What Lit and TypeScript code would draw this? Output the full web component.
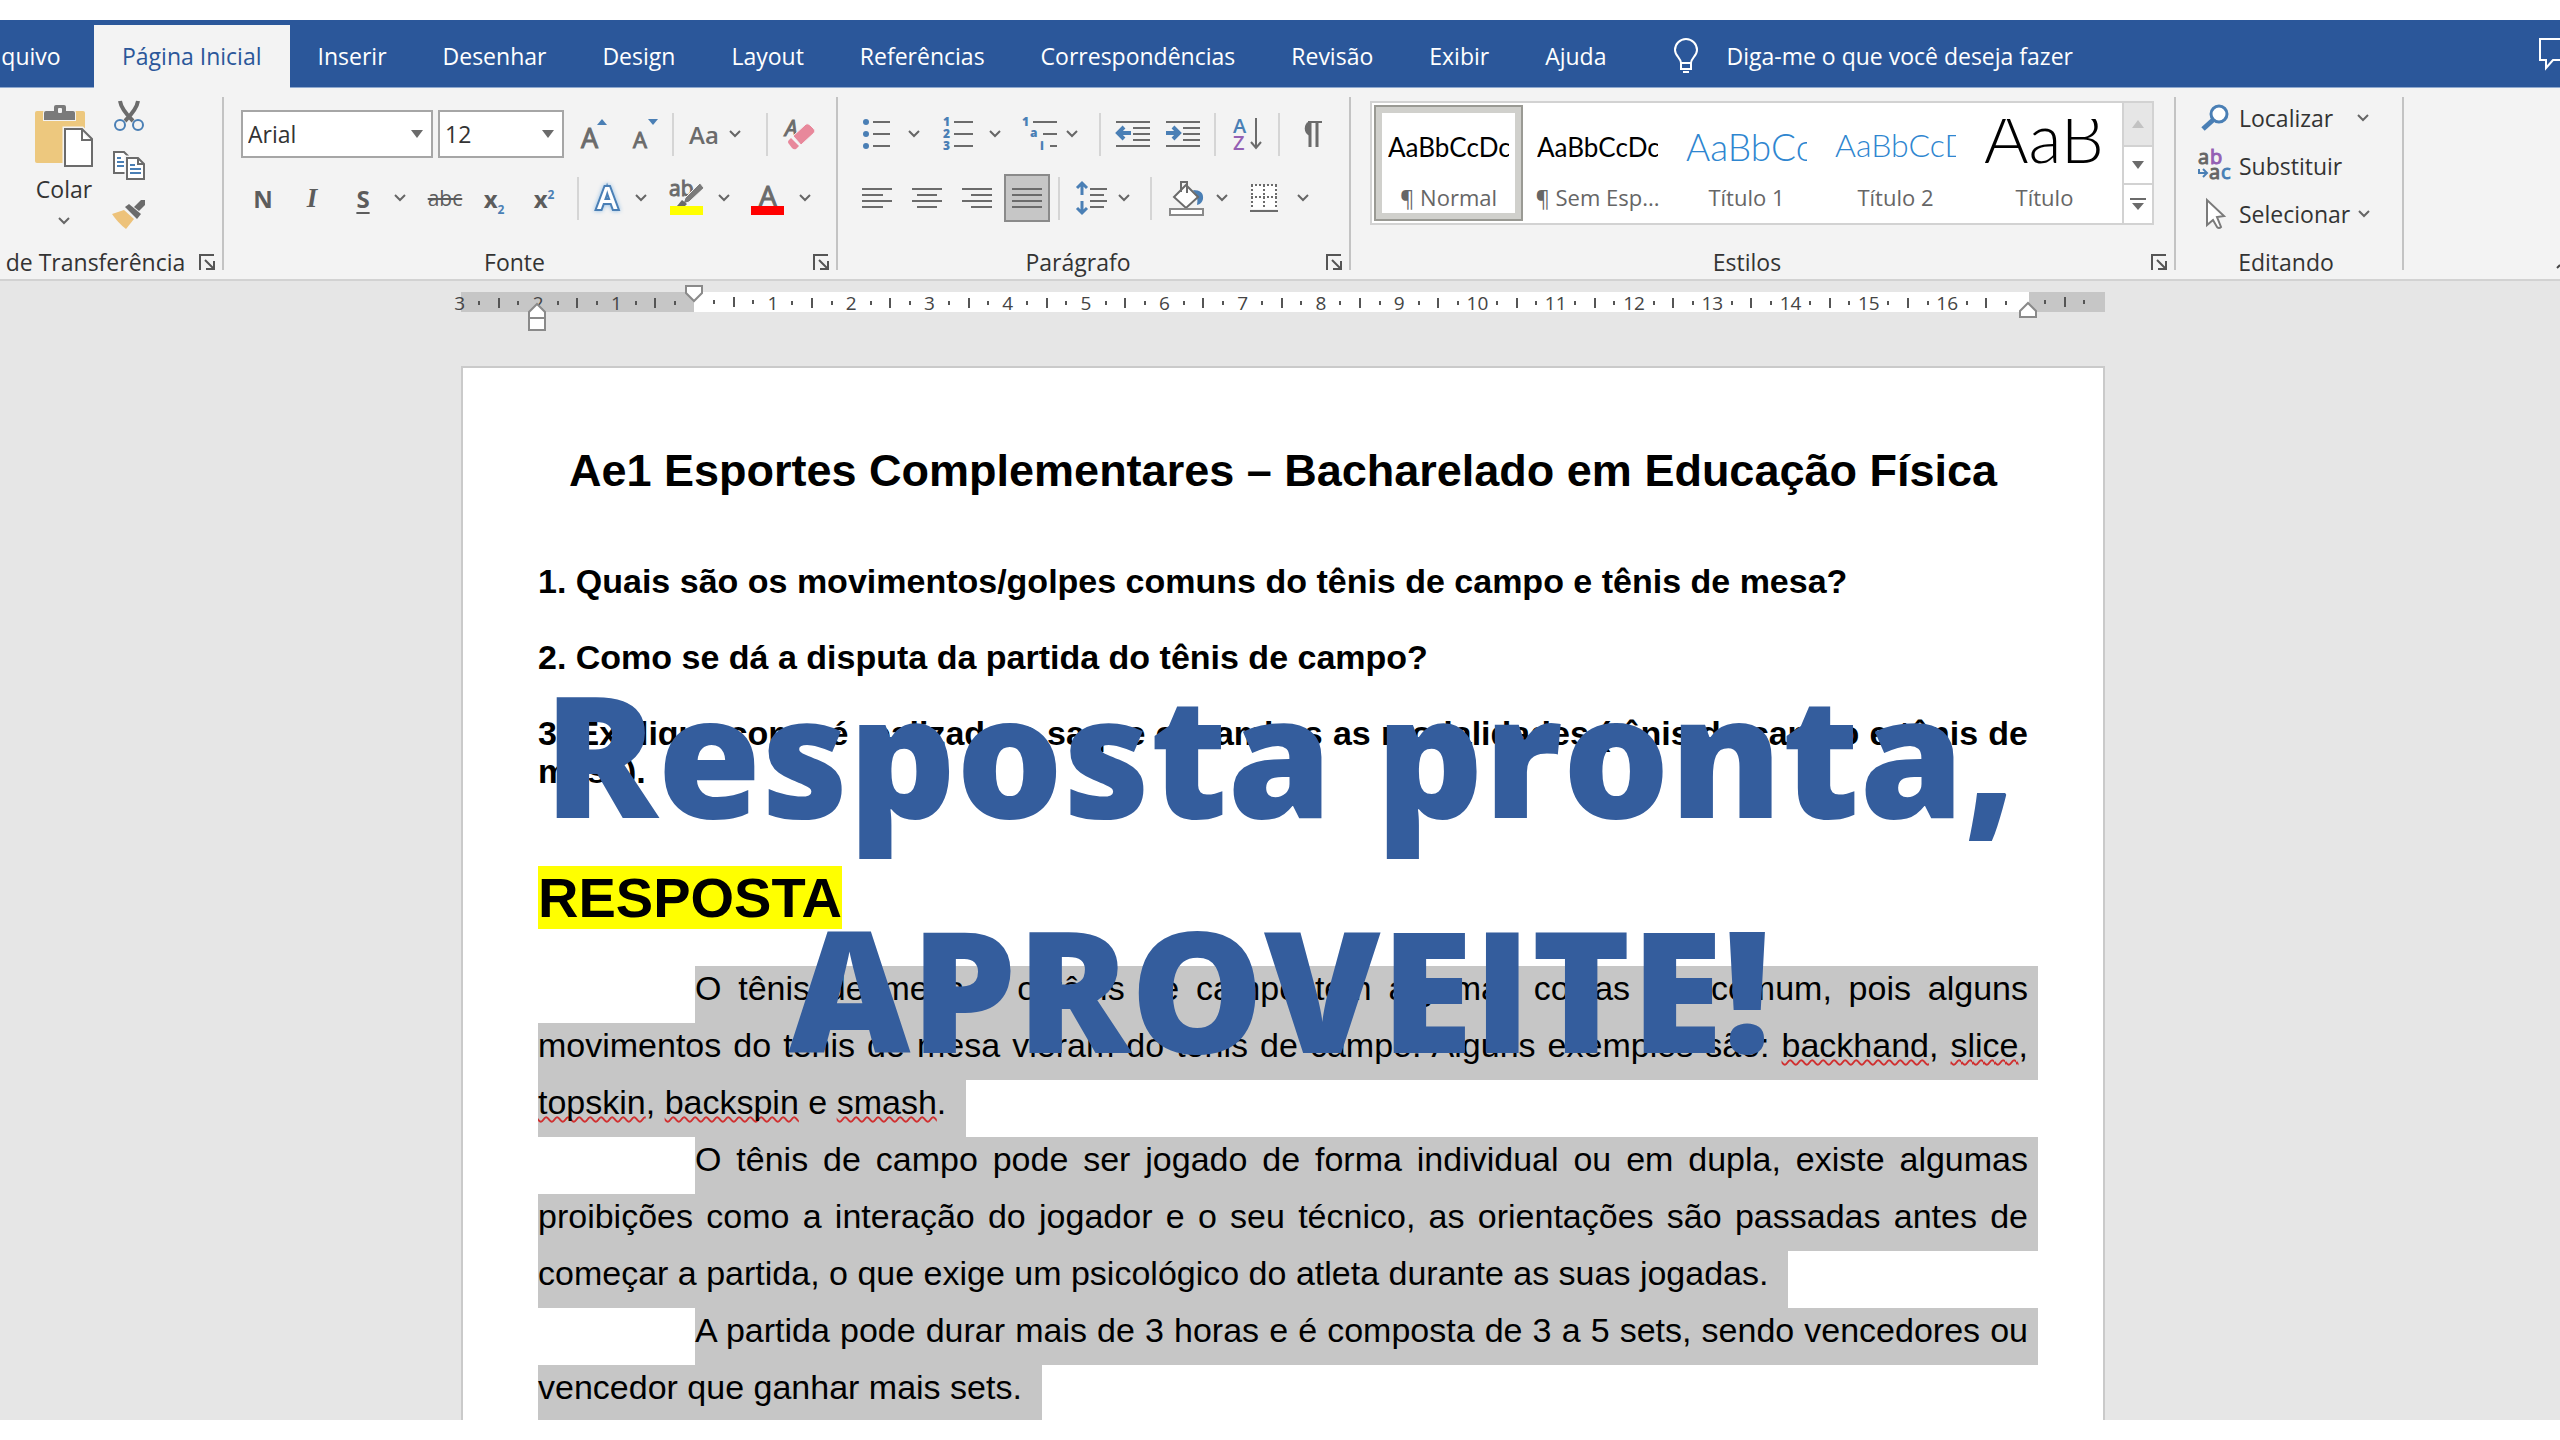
import { LitElement, html, svg, css, nothing } from "lit";
import { customElement, property } from "lit/decorators.js";

const gray = "#6b6b6b";
const blue = "#4a7fb5";

/** Horizontal strokes of a text-like icon: [x1, x2, y] */
const bars = (rows: number[][], color = gray) =>
  rows.map(([a, b, y]) => svg`<path d="M${a} ${y}H${b}" stroke=${color} stroke-width="2"/>`);

const icons: Record<string, { w: number; h: number; art: unknown }> = {
  paste: { w: 60, h: 64, art: svg`
    <rect x="1" y="7" width="50" height="52" rx="2" fill="#edc87e"/>
    <path d="M10 16V9a2 2 0 0 1 2-2h8V3a2 2 0 0 1 2-2h8a2 2 0 0 1 2 2V7h7a2 2 0 0 1 2 2v7z" fill="#7a7a7a" stroke="#f3f3f3" stroke-width="2" paint-order="stroke"/>
    <rect x="24" y="4" width="4" height="5" rx="1" fill="#f3f3f3"/>
    <path d="M31 25H48L58 35V62H31z" fill="#fff" stroke="#f3f3f3" stroke-width="5"/>
    <path d="M31 25H48L58 35V62H31zM48 25V36H58" fill="#fff" stroke="#6b6b6b" stroke-width="2"/>` },
  cut: { w: 32, h: 32, art: svg`
    <path d="M7 1C8 8 13 14 20 21M25 1C24 8 19 14 12 21" stroke=${gray} stroke-width="4" fill="none"/>
    <circle cx="7" cy="25" r="5" fill="none" stroke=${blue} stroke-width="2"/>
    <circle cx="25" cy="25" r="5" fill="none" stroke=${blue} stroke-width="2"/>` },
  copy: { w: 34, h: 30, art: svg`
    <path d="M2 2H12L16 6V23H2z" fill="#fff" stroke=${gray} stroke-width="2"/>
    ${bars([[5, 9, 8], [5, 12, 12], [5, 12, 16]], blue)}
    <path d="M15 8H26L32 14V29H15z" fill="#fff" stroke="#f3f3f3" stroke-width="5"/>
    <path d="M15 8H26L32 14V29H15z" fill="#fff" stroke=${gray} stroke-width="2"/>
    <path d="M26 8V14H32" fill="none" stroke=${gray} stroke-width="2"/>
    ${bars([[18, 23, 15], [18, 29, 19], [18, 29, 23]], blue)}` },
  brush: { w: 34, h: 30, art: svg`
    <path d="M0 15L12 11L22 20L14 30Q6 24 0 15z" fill="#edc27a"/>
    <path d="M13 8L17 5L29 15L25 20z" fill=${gray}/>
    <path d="M22 8L29 1H33V6L27 12z" fill=${gray}/>` },
  grow: { w: 28, h: 32, art: svg`
    <text x="1" y="30" font-size="27" fill=${gray} stroke=${gray}>A</text><path d="M17 7L22 1L27 7z" fill=${blue}/>` },
  shrink: { w: 28, h: 32, art: svg`
    <text x="2" y="30" font-size="22" fill=${gray} stroke=${gray}>A</text><path d="M17 1H27L22 7z" fill=${blue}/>` },
  eraser: { w: 32, h: 34, art: svg`
    <text x="1" y="19" font-size="22" font-style="italic" fill=${gray} stroke=${gray}>A</text>
    <path d="M9 19L22 7Q24 6 26 8L30 12Q32 14 30 16L17 28z" fill="#e8889b" stroke="#f3f3f3"/>
    <path d="M7 21L15 29L12 32Q10 33 8 31L5 27Q3 25 5 23z" fill="#e8889b"/>` },
  glow: { w: 34, h: 36, art: svg`
    <text class="halo" x="6" y="29" font-size="31" font-weight="600" fill="#fff" stroke=${blue} stroke-width="4" paint-order="stroke">A</text>` },
  marker: { w: 36, h: 36, art: svg`
    <text x="0" y="16" font-size="21" fill=${gray} stroke=${gray}>ab</text>
    <path d="M31 3L35 8L20 22L14 24L16 18z" fill="#7a7a7a" stroke="#f3f3f3"/>
    <path d="M8 26L13 20L18 24L16 26z" fill=${gray}/><rect x="1" y="26" width="33" height="9" fill="#ff0"/>` },
  color: { w: 34, h: 36, art: svg`
    <text x="8" y="26" font-size="28" fill=${gray} stroke=${gray}>A</text><rect y="26" width="33" height="9" fill="#f00"/>` },
  bullets: { w: 28, h: 32, art: svg`
    <circle cx="4" cy="4" r="3" fill=${blue}/><circle cx="4" cy="16" r="3" fill=${blue}/><circle cx="4" cy="28" r="3" fill=${blue}/>
    ${bars([[11, 28, 4], [11, 28, 16], [11, 28, 28]])}` },
  numbers: { w: 30, h: 36, art: svg`
    <g font-size="12" font-weight="800" fill=${blue}><text x="0" y="10">1</text><text x="0" y="22">2</text><text x="0" y="34">3</text></g>
    ${bars([[11, 30, 6], [11, 30, 18], [11, 30, 30]])}` },
  levels: { w: 36, h: 36, art: svg`
    <g font-size="12" font-weight="800" fill=${blue}><text x="0" y="10">1</text><text x="8" y="21">a</text><text x="18" y="34">i</text></g>
    ${bars([[11, 35, 6], [21, 35, 18], [28, 35, 30]])}` },
  outdent: { w: 34, h: 30, art: svg`
    ${bars([[0, 34, 3], [17, 34, 9], [17, 34, 15], [17, 34, 21], [0, 34, 27]])}
    <path d="M15 14H4M8 8L2 14L8 20" fill="none" stroke=${blue} stroke-width="4"/>` },
  indent: { w: 34, h: 30, art: svg`
    ${bars([[0, 34, 3], [17, 34, 9], [17, 34, 15], [17, 34, 21], [0, 34, 27]])}
    <path d="M0 14H11M7 8L13 14L7 20" fill="none" stroke=${blue} stroke-width="4"/>` },
  sort: { w: 30, h: 34, art: svg`
    <text x="0" y="16" font-size="20" font-weight="600" fill=${blue}>A</text><text x="0" y="33" font-size="20" font-weight="600" fill="#9460b4">Z</text>
    <path d="M23 1V30M18 25L23 31L28 25" fill="none" stroke=${gray} stroke-width="2"/>` },
  pilcrow: { w: 24, h: 28, art: svg`
    <path d="M9 2H23" stroke=${gray} stroke-width="2"/><path d="M11 2V27M18 2V27" stroke=${gray} stroke-width="3"/><path d="M11 1A8 8 0 0 0 11 16z" fill=${gray}/>` },
  left: { w: 30, h: 22, art: bars([[0, 30, 2], [0, 21, 8], [0, 30, 14], [0, 21, 20]]) },
  center: { w: 30, h: 22, art: bars([[0, 30, 2], [5, 25, 8], [0, 30, 14], [5, 25, 20]]) },
  right: { w: 30, h: 22, art: bars([[0, 30, 2], [9, 30, 8], [0, 30, 14], [9, 30, 20]]) },
  justify: { w: 30, h: 22, art: bars([[0, 30, 2], [0, 30, 8], [0, 30, 14], [0, 30, 20]]) },
  spacing: { w: 30, h: 34, art: svg`
    <path d="M5 3V14M0 7L5 2L10 7M5 20V31M0 27L5 32L10 27" fill="none" stroke=${blue} stroke-width="3"/>
    ${bars([[13, 30, 8], [13, 27, 14], [13, 30, 20], [13, 27, 26]])}` },
  bucket: { w: 36, h: 36, art: svg`
    <path d="M24 10Q35 10 34 19Q33 24 28 25Q30 18 24 10z" fill=${blue}/>
    <path d="M17 5L29 17L17 28L5 17z" fill="#fff" stroke=${gray} stroke-width="2"/>
    <path d="M12 12V2H18V13" fill="none" stroke=${gray} stroke-width="2"/>
    <rect x="1" y="29" width="33" height="6" fill="#fff" stroke="#8a8a8a" stroke-width="2"/>` },
  borders: { w: 28, h: 30, art: svg`
    <path d="M1 2H27V26H1z" fill="#fff"/><path d="M1 2H28M1 14H28M2 2V26M14 2V26M26 2V26" stroke=${gray} stroke-width="2" stroke-dasharray="2 2"/>
    <path d="M0 28H28" stroke=${gray} stroke-width="2"/>` },
  launcher: { w: 17, h: 17, art: svg`
    <path d="M1 16V1H15M6 6L14 14M15 7V15H7" fill="none" stroke="#555" stroke-width="2"/>` },
  search: { w: 30, h: 28, art: svg`
    <path d="M13 16L3 25" stroke=${blue} stroke-width="5"/><circle cx="19" cy="10" r="8" fill="#fff" stroke=${blue} stroke-width="3"/>` },
  replace: { w: 34, h: 34, art: svg`
    <g font-size="20" stroke-width="1"><text x="0" y="15" fill="#666" stroke="#666">a</text><text x="12" y="15" fill="#9460b4" stroke="#9460b4">b</text>
    <text x="11" y="30" fill="#666" stroke="#666">a</text><text x="23" y="30" fill=${blue} stroke=${blue}>c</text></g>
    <path d="M1 20V24H8M5 20L9 24L5 28" fill="none" stroke=${blue} stroke-width="2"/>` },
  pointer: { w: 22, h: 34, art: svg`
    <path d="M3 3V28L9 23L13 30Q15 32 17 30L13 20L20 19z" fill="#fff" stroke="#7a7a7a" stroke-width="2"/>` },
  bulb: { w: 28, h: 36, art: svg`
    <path d="M9 25C9 20 3 18 3 12A11 11 0 0 1 25 12C25 18 19 20 19 25V31H9V25H19M11 34H17" fill="none" stroke="#fff" stroke-width="2"/>` },
  comment: { w: 22, h: 34, art: svg`
    <path d="M23 2H2V23H8V31L15 23H23" fill="none" stroke="#fff" stroke-width="2"/>` },
  chevron: { w: 14, h: 10, art: svg`<path d="M2 2L7 7L12 2" fill="none" stroke="#666" stroke-width="2"/>` },
  down: { w: 12, h: 8, art: svg`<path d="M0 0H12L6 8z" fill="#6b6b6b"/>` },
  up: { w: 12, h: 8, art: svg`<path d="M0 8H12L6 0z" fill="#c2c2c2"/>` },
  more: { w: 16, h: 14, art: svg`<path d="M0 2H16" stroke=${gray} stroke-width="2"/><path d="M2 6H14L8 13z" fill=${gray}/>` },
  collapse: { w: 3, h: 6, art: svg`<path d="M0 5L3 2" stroke="#444" stroke-width="2"/>` },
  firstLine: { w: 18, h: 18, art: svg`<path d="M1 1H17V8L9 16L1 8z" fill="#fff" stroke="#8a8a8a" stroke-width="2"/>` },
  hanging: { w: 18, h: 30, art: svg`<path d="M1 16V10L9 2L17 10V16zM1 16H17V28H1z" fill="#fff" stroke="#8a8a8a" stroke-width="2"/>` },
  rightIndent: { w: 18, h: 18, art: svg`<path d="M1 16V10L9 2L17 10V16z" fill="#fff" stroke="#8a8a8a" stroke-width="2"/>` },
};

const icon = (name: string) => {
  const i = icons[name];
  return html`<svg class="icon" width=${i.w} height=${i.h} viewBox="0 0 ${i.w} ${i.h}" aria-hidden="true">${i.art}</svg>`;
};

const tool = (label: string, body: unknown, cls = "") =>
  html`<button class="tool ${cls}" aria-label=${label}>${body}</button>`;
const chev = (label: string) => tool(`Opções de ${label}`, icon("chevron"), "chev");
const sep = html`<i class="sep"></i>`;

const base = css`
  :host, * { box-sizing: border-box; }
  button, select, input { font: inherit; color: inherit; background: none; border: 0; margin: 0; padding: 0; }
  .icon { display: block; flex: none; overflow: visible; font-family: "Open Sans", sans-serif; }
  .tool { display: flex; align-items: center; justify-content: center; }
`;

@customElement("ribbon-group")
class RibbonGroup extends LitElement {
  @property() label = "";
  @property({ type: Boolean }) launcher = false;
  static styles = [base, css`
    :host { display: flex; flex-direction: column; position: relative; padding-bottom: 5px; }
    :host::after { content: ""; position: absolute; right: 0; top: 9px; bottom: 9px; width: 2px; background: #c3c3c3; }
    .body { flex: 1; }
    .foot { display: flex; align-items: center; height: 24px; padding-right: 8px; }
    .label { flex: 1; text-align: center; line-height: 24px; white-space: nowrap; }
    .foot .tool { padding: 0 0 0 8px; }
  `];
  render() {
    return html`<div class="body"><slot></slot></div>
      <div class="foot"><span class="label">${this.label}</span>
        ${this.launcher ? tool(`Configurações de ${this.label}`, icon("launcher")) : nothing}</div>`;
  }
}

@customElement("word-ruler")
class WordRuler extends LitElement {
  static styles = [base, css`
    :host { display: block; position: relative; height: 20px; font-size: 19px; color: #444;
      background: linear-gradient(to right, #c6c6c6 14.2%, #fff 14.2% 95.4%, #c6c6c6 95.4%); }
    .units { display: flex; height: 100%; margin: 0 11px 0 -11px; }
    .unit { flex: 1 1 0; display: grid; grid-template-columns: repeat(4, 1fr); align-items: center; justify-items: center; min-width: 0; }
    .num { width: 0; display: flex; justify-content: center; line-height: 22px; }
    .dot { width: 2px; height: 4px; background: #555; }
    .bar { width: 2px; height: 10px; background: #555; }
    .mark { position: absolute; margin-left: -9px; }
    .first { left: 14.2%; top: -7px; }
    .hang { left: 4.6%; top: 10px; }
    .end { left: 95.3%; top: 9px; }
  `];
  render() {
    const units = Array.from({ length: 21 }, (_, i) => i - 3);
    return html`<div class="units">${units.map((n) => html`<div class="unit">
        <span class="num">${n === 0 || n === 17 ? "" : Math.abs(n)}</span><i class="dot"></i><i class="bar"></i><i class="dot"></i></div>`)}</div>
      <span class="mark first">${icon("firstLine")}</span>
      <span class="mark hang">${icon("hanging")}</span>
      <span class="mark end">${icon("rightIndent")}</span>`;
  }
}

const tabs = ["Inserir", "Desenhar", "Design", "Layout", "Referências", "Correspondências", "Revisão", "Exibir", "Ajuda"];

const styleItems = [
  { sample: "AaBbCcDc", name: "¶ Normal", cls: "body-style", on: true },
  { sample: "AaBbCcDc", name: "¶ Sem Esp...", cls: "body-style" },
  { sample: "AaBbCc", name: "Título 1", cls: "h1-style" },
  { sample: "AaBbCcD", name: "Título 2", cls: "h2-style" },
  { sample: "AaB", name: "Título", cls: "title-style" },
];

const w = (t: string) => html`<span class="wavy">${t}</span>`;

const lines: { text: unknown; indent?: boolean; last?: boolean }[] = [
  { text: "O tênis de mesa e o tênis de campo tem algumas coisas em comum, pois alguns", indent: true },
  { text: html`movimentos do tênis de mesa vieram do tênis de campo. Alguns exemplos são: ${w("backhand")}, ${w("slice")},` },
  { text: html`${w("topskin")}, ${w("backspin")} e ${w("smash")}.`, last: true },
  { text: "O tênis de campo pode ser jogado de forma individual ou em dupla, existe algumas", indent: true },
  { text: "proibições como a interação do jogador e o seu técnico, as orientações são passadas antes de" },
  { text: "começar a partida, o que exige um psicológico do atleta durante as suas jogadas.", last: true },
  { text: "A partida pode durar mais de 3 horas e é composta de 3 a 5 sets, sendo vencedores ou", indent: true },
  { text: "vencedor que ganhar mais sets.", last: true },
];

@customElement("app-root")
class AppRoot extends LitElement {
  static styles = [base, css`
    :host { display: flex; flex-direction: column; position: relative; height: 100vh; padding: 20px 0; overflow: hidden;
      background: #fff; font-family: "Open Sans", "Noto Sans", sans-serif; font-size: 23px; color: #333; }
    .tabs { flex: none; display: flex; align-items: stretch; height: 68px; background: #2b579a; color: #fff; border-bottom: 1px solid #8fa9cf; }
    .tab { padding: 4px 28px 0; white-space: nowrap; }
    .tab.cut { min-width: 94px; padding: 4px 32px 0 0; }
    .tab.active { margin: 5px 0 -1px; padding: 0 28px 2px; background: #f3f3f3; color: #2b579a; }
    .tell { display: flex; align-items: center; gap: 26px; padding: 4px 30px 0; margin-left: 8px; }
    .comment { margin-left: auto; }

    .ribbon { flex: none; display: grid; grid-template-columns: 224px 614px 513px 825px 228px 1fr; height: 193px;
      background: #f3f3f3; border-bottom: 2px solid #d2d2d2; }
    .collapse { justify-self: end; align-self: end; padding-bottom: 10px; }
    .row { display: grid; height: 48px; align-items: center; justify-items: center; }
    .row .tool { height: 48px; }
    .row .chev { justify-self: start; }
    .sep { width: 2px; height: 43px; background: #d5d5d5; }
    .glyph { color: #5c5c5c; font-weight: 700; font-size: 24px; }
    .ital { font-family: "Liberation Serif", serif; font-style: italic; font-size: 27px; }
    .under { text-decoration: underline; text-underline-offset: 4px; text-decoration-thickness: 2px; }
    .strike { font-weight: 400; font-size: 21px; text-decoration: line-through; }
    .plain { font-weight: 600; color: #6b6b6b; }
    .glyph sub, .glyph sup { font-size: 12px; color: #4a7fb5; line-height: 0; }
    .halo { filter: drop-shadow(0 0 2px #8dbbe4); }

    .clip { display: flex; padding: 12px 0 0 34px; }
    .paste { display: flex; flex-direction: column; align-items: center; width: 60px; padding-top: 4px; gap: 6px; line-height: 30px; }
    .paste .icon:last-child { margin-top: 6px; }
    .minor { display: flex; flex-direction: column; align-items: center; gap: 17px; margin-left: 18px; }
    .minor .tool { height: 32px; }

    .font-rows, .par-rows { display: flex; flex-direction: column; gap: 16px; padding-top: 22px; }
    .font-top { padding-left: 17px; grid-template-columns: 197px 126px 60px 42px 14px 48px 22px 34px 32px; }
    .font-low { padding-left: 11px; grid-template-columns: 56px 42px 60px 24px 56px 42px 58px 9px 52px 23px 60px 21px 60px 16px; }
    .par-top { padding-left: 7px; grid-template-columns: 62px 21px 60px 27px 50px 27px 16px 50px 49px 16px 49px 14px 50px; }
    .par-low { padding-left: 14px; grid-template-columns: 50px 50px 50px 50px 14px 51px 27px 14px 57px 17px 64px 16px; }
    .combo { display: grid; align-items: center; justify-self: start; width: 192px; height: 48px; background: #fff; border: 2px solid #a6a6a6; }
    .combo.small { width: 126px; }
    .combo select { grid-area: 1 / 1; appearance: none; width: 100%; height: 44px; padding-left: 5px; }
    .combo .icon { grid-area: 1 / 1; justify-self: end; margin-right: 8px; pointer-events: none; }
    .row .on { width: 46px; background: #c6c6c6; border: 2px solid #8a8a8a; }

    .gallery { display: flex; height: 124px; margin: 13px 22px 0 19px; background: #fff; border: 2px solid #d2d2d2; }
    .styles { flex: 1; display: grid; grid-template-columns: repeat(5, 149px); padding: 2px 0 2px 2px; }
    .style { display: flex; flex-direction: column; align-items: center; padding: 12px 12px 0; border: 2px solid transparent; color: #666; min-width: 0; }
    .style.on { border-color: #9a9a94; box-shadow: inset 0 0 0 6px #d0d0cc; }
    .sample { display: block; width: 121px; height: 50px; overflow: hidden; white-space: nowrap; text-align: left;
      font-family: Lato, sans-serif; color: #000; }
    .body-style { font-size: 26px; line-height: 56px; }
    .h1-style { font-size: 37px; font-weight: 300; line-height: 56px; color: #2e86d0; }
    .h2-style { font-size: 32px; font-weight: 300; line-height: 52px; color: #2e86d0; }
    .title-style { font-size: 68px; font-weight: 300; line-height: 35px; }
    .name { line-height: 30px; margin-top: 13px; font-size: 22px; white-space: nowrap; }
    .scroll { display: grid; grid-template-rows: 42px 38px 1fr; width: 30px; border-left: 2px solid #d2d2d2; }
    .scroll .tool + .tool { border-top: 2px solid #d2d2d2; }
    .scroll .tool:first-child { background: #e6e6e6; }

    .edit { display: flex; flex-direction: column; align-items: flex-start; padding: 6px 0 0 20px; }
    .edit .tool { height: 48px; justify-content: flex-start; gap: 5px; }
    .slot { width: 38px; display: flex; justify-content: center; }
    .edit .icon { flex: none; }
    .wide { margin-left: 18px; }
    .near { margin-left: 2px; }

    .desk { flex: 1; min-height: 0; overflow: hidden; background: #e6e6e6; padding: 11px 0 0 6px; }
    word-ruler, .page { width: 1644px; max-width: 100%; margin: 0 auto; }
    .page { margin-top: 54px; padding: 78px 75px; background: #fff; border: 2px solid #cacaca; color: #000;
      font-family: "Liberation Sans", Arial, sans-serif; font-size: 34px; line-height: 38px; }
    h1 { margin: 0 0 66px; font-size: 45px; line-height: 50px; text-align: center; white-space: nowrap; }
    .q { margin: 0 0 38px; font-weight: 700; text-align: justify; }
    h2 { margin: 76px 0 37px; font-size: 56px; line-height: 63px; }
    mark { background: #ff0; color: inherit; }
    .line { margin-right: -10px; padding: 0 10px 12px 0; line-height: 45px; background: #c6c6c6; text-align: justify; text-align-last: justify; white-space: nowrap; }
    .line.indent { margin-left: 157px; }
    .line.last { width: fit-content; padding-right: 20px; text-align-last: left; }
    .wavy { text-decoration: underline wavy #d03030 2px; text-decoration-skip-ink: none; text-underline-offset: 2px; }

    .banner { position: absolute; top: 635px; left: 0; right: 0; margin: 0; text-align: center; color: #345d9d;
      font-size: 168px; line-height: 235px; font-weight: 800; pointer-events: none; }
    .banner span { display: block; }
  `];

  render() {
    return html`
      <nav class="tabs">
        <button class="tab cut">quivo</button>
        <button class="tab active">Página Inicial</button>
        ${tabs.map((t) => html`<button class="tab">${t}</button>`)}
        <button class="tell">${icon("bulb")}<span>Diga-me o que você deseja fazer</span></button>
        <button class="comment" aria-label="Comentários">${icon("comment")}</button>
      </nav>
      <div class="ribbon">
        <ribbon-group label="de Transferência" launcher>
          <div class="clip">
            <button class="paste">${icon("paste")}<span>Colar</span>${icon("chevron")}</button>
            <div class="minor">${tool("Recortar", icon("cut"))}${tool("Copiar", icon("copy"))}${tool("Pincel", icon("brush"))}</div>
          </div>
        </ribbon-group>
        <ribbon-group label="Fonte" launcher>
          <div class="font-rows">
            <div class="row font-top">
              <label class="combo"><select aria-label="Fonte"><option>Arial</option></select>${icon("down")}</label>
              <label class="combo small"><select aria-label="Tamanho"><option>12</option></select>${icon("down")}</label>
              ${tool("Aumentar", icon("grow"))}${tool("Diminuir", icon("shrink"))}${sep}
              ${tool("Maiúsculas", html`<span class="glyph plain">Aa</span>`)}${chev("Maiúsculas")}${sep}
              ${tool("Limpar", icon("eraser"))}
            </div>
            <div class="row font-low">
              ${tool("Negrito", html`<span class="glyph">N</span>`)}
              ${tool("Itálico", html`<span class="glyph ital">I</span>`)}
              ${tool("Sublinhado", html`<span class="glyph under">S</span>`)}${chev("Sublinhado")}
              ${tool("Tachado", html`<span class="glyph strike">abc</span>`)}
              ${tool("Subscrito", html`<span class="glyph">x<sub>2</sub></span>`)}
              ${tool("Sobrescrito", html`<span class="glyph">x<sup>2</sup></span>`)}${sep}
              ${tool("Efeitos", icon("glow"))}${chev("Efeitos")}
              ${tool("Realce", icon("marker"))}${chev("Realce")}
              ${tool("Cor", icon("color"))}${chev("Cor")}
            </div>
          </div>
        </ribbon-group>
        <ribbon-group label="Parágrafo" launcher>
          <div class="par-rows">
            <div class="row par-top">
              ${tool("Marcadores", icon("bullets"))}${chev("Marcadores")}
              ${tool("Numeração", icon("numbers"))}${chev("Numeração")}
              ${tool("Vários níveis", icon("levels"))}${chev("Vários níveis")}${sep}
              ${tool("Diminuir recuo", icon("outdent"))}${tool("Aumentar recuo", icon("indent"))}${sep}
              ${tool("Classificar", icon("sort"))}${sep}${tool("Mostrar tudo", icon("pilcrow"))}
            </div>
            <div class="row par-low">
              ${tool("À esquerda", icon("left"))}${tool("Centralizar", icon("center"))}
              ${tool("À direita", icon("right"))}${tool("Justificar", icon("justify"), "on")}${sep}
              ${tool("Espaçamento", icon("spacing"))}${chev("Espaçamento")}${sep}
              ${tool("Sombreamento", icon("bucket"))}${chev("Sombreamento")}
              ${tool("Bordas", icon("borders"))}${chev("Bordas")}
            </div>
          </div>
        </ribbon-group>
        <ribbon-group label="Estilos" launcher>
          <div class="gallery">
            <div class="styles">${styleItems.map((s) => html`
              <button class="style ${s.on ? "on" : ""}"><span class="sample ${s.cls}">${s.sample}</span><span class="name">${s.name}</span></button>`)}</div>
            <div class="scroll">${tool("Acima", icon("up"))}${tool("Abaixo", icon("down"))}${tool("Mais", icon("more"))}</div>
          </div>
        </ribbon-group>
        <ribbon-group label="Editando">
          <div class="edit">
            <button class="tool"><span class="slot">${icon("search")}</span>Localizar<span class="wide">${icon("chevron")}</span></button>
            <button class="tool"><span class="slot">${icon("replace")}</span>Substituir</button>
            <button class="tool"><span class="slot">${icon("pointer")}</span>Selecionar<span class="near">${icon("chevron")}</span></button>
          </div>
        </ribbon-group>
        <button class="collapse" aria-label="Recolher">${icon("collapse")}</button>
      </div>
      <main class="desk">
        <word-ruler></word-ruler>
        <article class="page">
          <h1>Ae1 Esportes Complementares – Bacharelado em Educação Física</h1>
          <p class="q">1. Quais são os movimentos/golpes comuns do tênis de campo e tênis de mesa?</p>
          <p class="q">2. Como se dá a disputa da partida do tênis de campo?</p>
          <p class="q">3. Explique como é realizado o saque em ambas as modalidades (tênis de campo e tênis de mesa).</p>
          <h2><mark>RESPOSTA</mark></h2>
          ${lines.map((l) => html`<div class="line ${l.indent ? "indent" : ""} ${l.last ? "last" : ""}">${l.text}</div>`)}
        </article>
      </main>
      <p class="banner"><span>Resposta pronta,</span><span>APROVEITE!</span></p>
    `;
  }
}
